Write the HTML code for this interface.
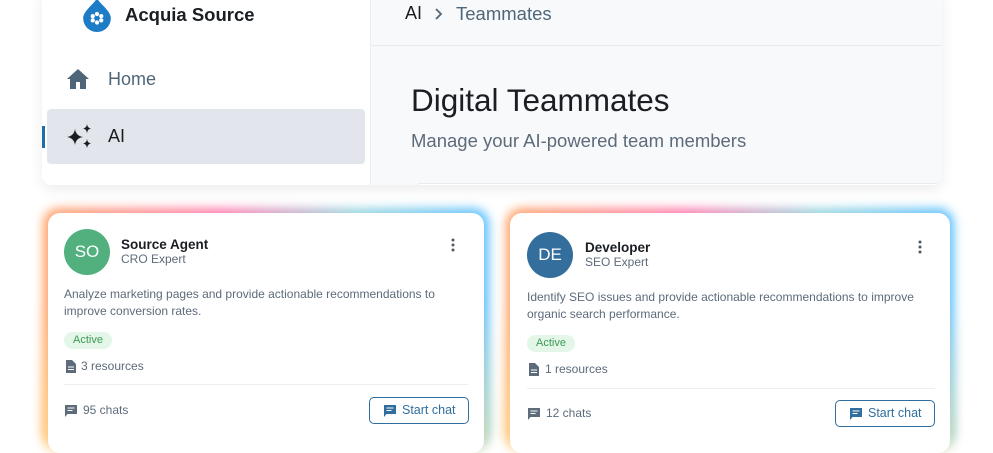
<!DOCTYPE html>
<html><head><meta charset="utf-8"><style>
*{box-sizing:border-box;margin:0;padding:0}
body{width:993px;height:432px;overflow:hidden;background:#fff;font-family:"Liberation Sans",sans-serif;position:relative}
.panel{position:absolute;left:42px;top:-10px;width:900px;height:195px;border-radius:0 0 10px 10px;background:#fff;box-shadow:0 4px 14px rgba(0,0,0,.08);overflow:hidden}
.side{position:absolute;left:0;top:0;width:329px;height:100%;background:#fff;border-right:1px solid #eceef1}
.main{position:absolute;left:329px;top:0;right:0;height:100%;background:#f8f9fb}
.glow{position:absolute;border-radius:16px;filter:blur(5px);background:linear-gradient(90deg,#ffa66b 0%,#ff7fb0 40%,#9ad6e0 70%,#5ec0ff 100%)}
.glow2{position:absolute;border-radius:16px;filter:blur(6px);background:linear-gradient(180deg,rgba(255,255,255,0) 0%,rgba(255,230,140,.8) 100%)}
.card{position:absolute;background:#fff;border-radius:12px}
.t{position:absolute;white-space:nowrap}
.av{position:absolute;width:46px;height:46px;border-radius:50%;color:#fff;font-size:17px;text-align:center;line-height:46px}
.desc{position:absolute;font-size:12px;color:#5d6b7a;line-height:17px;white-space:nowrap}
.badge{position:absolute;background:#e3f6e8;color:#3d9a57;font-size:11px;border-radius:10px;padding:2px 9px;line-height:13px}
.btn{position:absolute;border:1px solid #2f6e9e;border-radius:5px;color:#2f6e9e;font-size:12.5px;width:100px;height:27px;line-height:25px;padding-left:32px}
.hr{position:absolute;height:1px;background:#eceef1}
.s{font-size:12px;color:#5d6b7a}
</style></head><body>
<div class="panel">
 <div class="side">
  <svg style="position:absolute;left:40px;top:8px" width="30" height="34" viewBox="0 0 28 32"><path d="M14 0C12 5 1 12 1 19a13 13 0 0 0 26 0C27 12 16 5 14 0z" fill="#1d7cc6"/><g fill="#fff"><circle cx="14" cy="15" r="2"/><circle cx="14" cy="23" r="2"/><circle cx="10" cy="17" r="2"/><circle cx="18" cy="17" r="2"/><circle cx="10" cy="21" r="2"/><circle cx="18" cy="21" r="2"/></g></svg>
  <div class="t" style="left:83px;top:14px;font-size:18.5px;font-weight:bold;color:#1a1e23">Acquia Source</div>
  <svg style="position:absolute;left:24px;top:78px" width="24" height="22" viewBox="0 0 24 22"><path d="M12 1L1 11h3v10h6v-7h4v7h6V11h3z" fill="#4f6678"/></svg>
  <div class="t" style="left:66px;top:79px;font-size:18px;color:#4f6678">Home</div>
  <div style="position:absolute;left:5px;top:119px;width:318px;height:55px;background:#e2e6ec;border-radius:4px"></div>
  <div style="position:absolute;left:0;top:136px;width:3px;height:22px;background:#1b6ea8"></div>
  <svg style="position:absolute;left:24px;top:134px" width="28" height="26" viewBox="0 0 28 26"><path d="M9 5Q10 12 17 13Q10 14 9 21Q8 14 1 13Q8 12 9 5z" fill="#1a1e23"/><path d="M21 0Q21.5 4 25 4.5Q21.5 5 21 9Q20.5 5 17 4.5Q20.5 4 21 0z" fill="#1a1e23"/><path d="M21 15Q21.5 19 25 19.5Q21.5 20 21 24Q20.5 20 17 19.5Q20.5 19 21 15z" fill="#1a1e23"/></svg>
  <div class="t" style="left:66px;top:136px;font-size:18px;color:#1a1e23">AI</div>
 </div>
 <div class="main">
  <div style="position:absolute;left:0;right:0;top:55px;height:1px;background:#e8ebef"></div>
  <div class="t" style="left:34px;top:13px;font-size:18px;color:#1a1e23">AI</div>
  <svg style="position:absolute;left:63px;top:17px" width="10" height="14"><path d="M2 2l5 5-5 5" stroke="#4f6678" stroke-width="1.8" fill="none"/></svg>
  <div class="t" style="left:85px;top:13px;font-size:18.5px;color:#4f6678">Teammates</div>
  <div class="t" style="left:40px;top:92px;font-size:31.5px;color:#1a1e23">Digital Teammates</div>
  <div class="t" style="left:40px;top:140px;font-size:18.5px;color:#5d6b7a">Manage your AI-powered team members</div>
  <div style="position:absolute;left:45px;right:0;top:193px;height:4px;border-top:1px solid #e8ebef;background:#fff;border-radius:6px 0 0 0"></div>
 </div>
</div>

<div class="glow" style="left:43px;top:208px;width:446px;height:240px"></div>
<div class="glow2" style="left:43px;top:300px;width:446px;height:150px"></div>
<div class="card" style="left:48px;top:213px;width:436px;height:240px">
 <div class="av" style="left:16px;top:16px;background:#52b07e">SO</div>
 <div class="t" style="left:73px;top:24px;font-size:13.5px;font-weight:bold;color:#1a1e23">Source Agent</div>
 <div class="t" style="left:73px;top:39px;font-size:12px;color:#5d6b7a">CRO Expert</div>
 <svg style="position:absolute;left:402px;top:25px" width="6" height="14"><circle cx="3" cy="2" r="1.5" fill="#4f5a66"/><circle cx="3" cy="7" r="1.5" fill="#4f5a66"/><circle cx="3" cy="12" r="1.5" fill="#4f5a66"/></svg>
 <div class="desc" style="left:16px;top:73px">Analyze marketing pages and provide actionable recommendations to<br>improve conversion rates.</div>
 <div class="badge" style="left:16px;top:119px">Active</div>
 <svg style="position:absolute;left:18px;top:147px" width="10" height="13" viewBox="0 0 10 13"><path d="M0 0h6l4 4v9H0z" fill="#5d6b7a"/><path d="M2 7h6M2 9.5h6" stroke="#fff"/></svg>
 <div class="t s" style="left:33px;top:146px">3 resources</div>
 <div class="hr" style="left:16px;right:16px;top:171px"></div>
 <svg style="position:absolute;left:17px;top:192px" width="12" height="12" viewBox="0 0 12 12"><path d="M0 0h12v9H2.5L0 12z" fill="#5d6b7a"/><path d="M2.5 3h7M2.5 5.5h5" stroke="#fff"/></svg>
 <div class="t s" style="left:35px;top:190px">95 chats</div>
 <div class="btn" style="left:321px;top:184px">Start chat</div>
 <svg style="position:absolute;left:336px;top:192px" width="12" height="12" viewBox="0 0 12 12"><path d="M0 0h12v9H2.5L0 12z" fill="#2f6e9e"/><path d="M2.5 3h7M2.5 5.5h5" stroke="#fff"/></svg>
</div>

<div class="glow" style="left:506px;top:208px;width:448px;height:240px"></div>
<div class="glow2" style="left:506px;top:300px;width:448px;height:150px"></div>
<div class="card" style="left:510px;top:213px;width:440px;height:240px">
 <div class="av" style="left:17px;top:19px;background:#336e9c">DE</div>
 <div class="t" style="left:75px;top:27px;font-size:13.5px;font-weight:bold;color:#1a1e23">Developer</div>
 <div class="t" style="left:75px;top:42px;font-size:12px;color:#5d6b7a">SEO Expert</div>
 <svg style="position:absolute;left:407px;top:27px" width="6" height="14"><circle cx="3" cy="2" r="1.5" fill="#4f5a66"/><circle cx="3" cy="7" r="1.5" fill="#4f5a66"/><circle cx="3" cy="12" r="1.5" fill="#4f5a66"/></svg>
 <div class="desc" style="left:17px;top:76px">Identify SEO issues and provide actionable recommendations to improve<br>organic search performance.</div>
 <div class="badge" style="left:17px;top:122px">Active</div>
 <svg style="position:absolute;left:19px;top:150px" width="10" height="13" viewBox="0 0 10 13"><path d="M0 0h6l4 4v9H0z" fill="#5d6b7a"/><path d="M2 7h6M2 9.5h6" stroke="#fff"/></svg>
 <div class="t s" style="left:35px;top:149px">1 resources</div>
 <div class="hr" style="left:17px;right:15px;top:175px"></div>
 <svg style="position:absolute;left:18px;top:195px" width="12" height="12" viewBox="0 0 12 12"><path d="M0 0h12v9H2.5L0 12z" fill="#5d6b7a"/><path d="M2.5 3h7M2.5 5.5h5" stroke="#fff"/></svg>
 <div class="t s" style="left:36px;top:193px">12 chats</div>
 <div class="btn" style="left:325px;top:187px">Start chat</div>
 <svg style="position:absolute;left:340px;top:195px" width="12" height="12" viewBox="0 0 12 12"><path d="M0 0h12v9H2.5L0 12z" fill="#2f6e9e"/><path d="M2.5 3h7M2.5 5.5h5" stroke="#fff"/></svg>
</div>
</body></html>
